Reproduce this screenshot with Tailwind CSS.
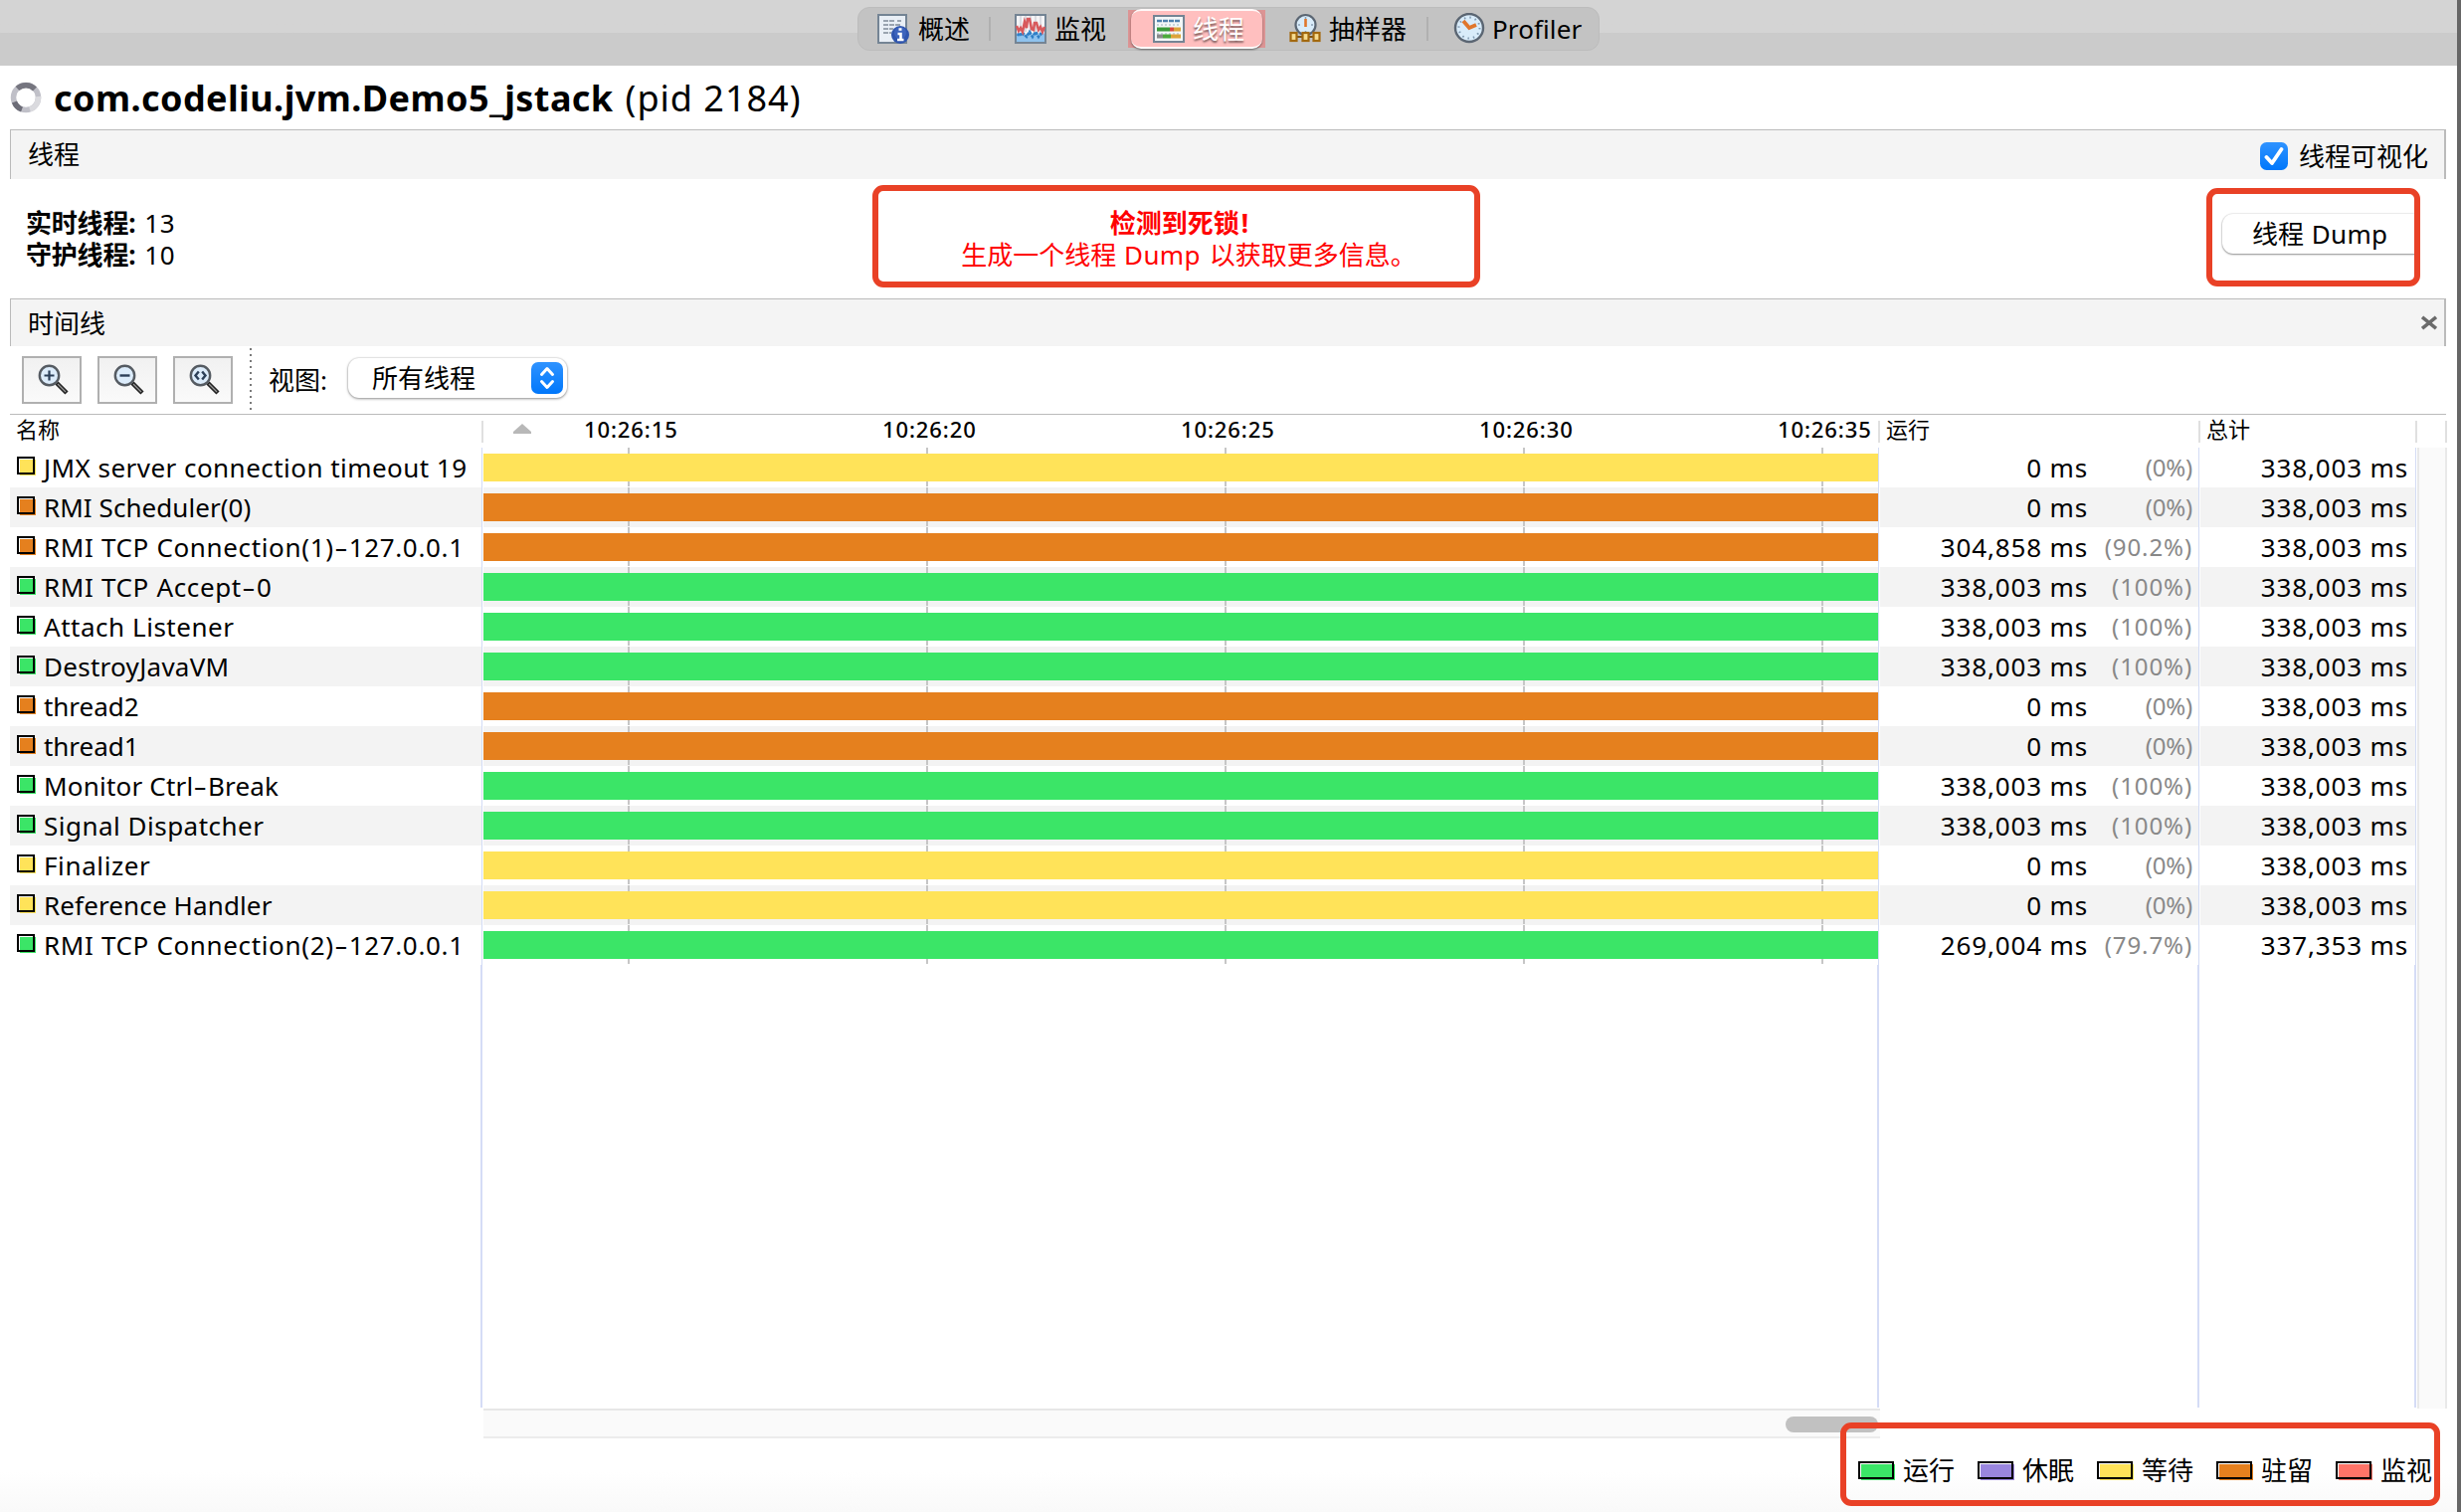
<!DOCTYPE html>
<html lang="zh-CN">
<head>
<meta charset="utf-8">
<title>VisualVM</title>
<script src="https://cdn.jsdelivr.net/npm/@tailwindcss/browser@4"></script>
</head>
<body class="flex w-[2474px] h-[1520px] overflow-hidden bg-white text-black text-[26px] leading-8 whitespace-nowrap font-['Noto_Sans','Noto_Sans_CJK_SC',sans-serif]">
<main class="relative flex flex-col w-[2470px] h-[1520px]">

  <!-- Tab strip -->
  <header class="flex h-[66px] shrink-0 justify-center items-start pt-[7px] bg-linear-to-b from-[#d4d4d4] from-50% to-[#cbcbcb] to-50%">
    <nav class="flex items-center w-[746px] h-11 rounded-xl bg-[#c3c3c3] border border-[#bcbcbc] pl-[19px] leading-[42px]">
      <svg class="w-8 h-8 shrink-0" viewBox="0 0 32 32">
        <rect x="1" y="2" width="28" height="28" fill="#e9eff6" stroke="#748494" stroke-width="2"/>
        <path d="M6 8h12M6 12h18M6 16h10M20 8h4M6 20h8" stroke="#9aa4b0" stroke-width="2" stroke-dasharray="5 1"/>
        <circle cx="23" cy="22" r="9" fill="#2f55ae"/><circle cx="23" cy="20" r="6" fill="#4c74cc" opacity=".5"/>
        <path d="M21.500 16.500h3M20.500 21h3v6M20 27h6.500" stroke="#fff" stroke-width="2.600" fill="none"/>
      </svg>
      <span class="ml-[9px] w-[54px]">概述</span>
      <i class="ml-[17px] w-0.5 h-6 bg-[#b0b0b0]"></i>
      <svg class="ml-[24px] w-8 h-8 shrink-0" viewBox="0 0 32 32">
        <rect x="1" y="2" width="30" height="28" fill="#f4f4f6" stroke="#748494" stroke-width="2"/>
        <path d="M6 3v16M11 3v16M16 3v16M21 3v16M26 3v16" stroke="#d2d4dc" stroke-width="1.500"/>
        <path d="M2 20l3 2 3-3 3 3 4-4 3 4 4-3 3 3 3-3 2 2v8H2z" fill="#8fc3ee"/>
        <path d="M3 23l2-3 2 3 2-2 3 3 3-5 3 5 3-5 3 5 2-3 2 2" stroke="#2e7fc6" stroke-width="2.600" fill="none" stroke-dasharray="3 1"/>
        <path d="M2 13l2 5 2-3 2 4 2-10 2 6 1-9 2 0 2 10 2 1 1-7 2 0 2 7 2-3 2 5 2-5" stroke="#d8595c" stroke-width="2.600" fill="none"/>
      </svg>
      <span class="ml-[8px] w-[54px]">监视</span>
      <div class="ml-[20px] w-[138px] h-[38px] shrink-0 flex justify-center items-center bg-[#dc9494]">
        <div class="flex items-center w-[132px] h-10 shrink-0 rounded-[10px] bg-[#ffbfbf] border-y-2 border-t-white/90 border-b-white shadow-[0_1px_2px_#0007] pl-[22px]">
          <svg class="w-8 h-8 shrink-0" viewBox="0 0 32 32">
            <rect x="1" y="3" width="30" height="26" fill="#f3f7f8" stroke="#748494" stroke-width="2"/>
            <path d="M4 8h24" stroke="#4f81ae" stroke-width="2.500" stroke-dasharray="5 1"/>
            <path d="M4 12h24M4 21h24" stroke="#c7d4da" stroke-width="2" stroke-dasharray="2 2"/>
            <path d="M4 16.500h13" stroke="#3a9a3a" stroke-width="4"/><path d="M17 16.500h4" stroke="#d84b3c" stroke-width="4"/><path d="M21 16.500h7" stroke="#dca43a" stroke-width="4"/>
            <path d="M4 23.500h6" stroke="#8a8a8a" stroke-width="4"/><path d="M10 23.500h8" stroke="#4caa3c" stroke-width="4"/><path d="M18 23.500h10" stroke="#dca43a" stroke-width="4"/>
          </svg>
          <span class="ml-[8px] text-white [text-shadow:0_2px_2px_#0008]">线程</span>
        </div>
      </div>
      <svg class="ml-[24px] w-8 h-8 shrink-0" viewBox="0 0 32 32">
        <circle cx="16.500" cy="12" r="10" fill="#d9ecfa" stroke="#5b6673" stroke-width="2.200"/>
        <path d="M16.500 4v2M16.500 18v2M9 12h2M22 12h2" stroke="#8aa0b5" stroke-width="1.500"/>
        <path d="M16.500 6v8" stroke="#e0762c" stroke-width="2.600"/>
        <path d="M7 24h18" stroke="#7c5413" stroke-width="2"/>
        <g fill="#f6dc90" stroke="#a3690f" stroke-width="2.200"><rect x="1.500" y="20" width="6" height="8"/><rect x="13.500" y="20" width="6" height="8"/><rect x="24.500" y="20" width="6" height="8"/></g>
      </svg>
      <span class="ml-[8px] w-[80px]">抽样器</span>
      <i class="ml-[18px] w-0.5 h-6 bg-[#b0b0b0]"></i>
      <svg class="ml-[25px] w-8 h-8 shrink-0" viewBox="0 0 32 32">
        <circle cx="16" cy="15" r="14" fill="#d9ecfa" stroke="#5b6673" stroke-width="2.400"/>
        <circle cx="16" cy="15" r="10.500" fill="none" stroke="#7f98b0" stroke-width="2" stroke-dasharray="1.500 4"/>
        <path d="M10 8l6 7 7-3" fill="none" stroke="#e0762c" stroke-width="3.800"/>
      </svg>
      <span class="ml-[7px] tracking-[0.1px]">Profiler</span>
    </nav>
  </header>

  <!-- Application title -->
  <h1 class="flex items-center h-16 shrink-0 pl-[10px] text-[36px] leading-[65px]">
    <svg class="w-8 h-8 shrink-0" viewBox="0 0 32 32" fill="none" stroke-width="5.500">
      <circle cx="16" cy="16" r="12.500" stroke="#c0c0c8"/>
      <path d="M7.500 7A12.500 12.500 0 0 1 25 7.500" stroke="#75757f"/>
      <path d="M4.500 20.500A12.500 12.500 0 0 0 12 28" stroke="#6c6c77"/>
      <path d="M28.500 15A12.500 12.500 0 0 1 20 28" stroke="#dadade"/>
    </svg>
    <b class="ml-[12px] tracking-[0.42px]">com.codeliu.jvm.Demo5_jstack</b>
    <span class="ml-[12px] tracking-[1px]">(pid 2184)</span>
  </h1>

  <!-- Threads section -->
  <div class="ml-[10px] w-[2449px] h-[50px] shrink-0 flex items-center justify-between pl-[17px] pr-[16px] bg-[#f4f4f4] border-t border-l border-r-2 border-[#bbb]">
    <span class="-mt-[2px]">线程</span>
    <label class="flex items-center mt-[2px]">
      <svg class="w-7 h-7 mr-[11px]" viewBox="0 0 28 28"><defs><linearGradient id="blue" x2="0" y2="1"><stop stop-color="#2f93ff"/><stop offset="1" stop-color="#0077fb"/></linearGradient></defs><rect width="28" height="28" rx="6.500" fill="url(#blue)"/><path d="M6.500 15l5.500 6L21.500 7" fill="none" stroke="#fff" stroke-width="3.800" stroke-linecap="round" stroke-linejoin="round"/></svg>
      线程可视化
    </label>
  </div>
  <section class="flex h-[120px] shrink-0 pl-[26px]">
    <div class="w-[851px] pt-[28px]">
      <p><b class="tracking-[-0.2px]">实时线程:</b><span class="ml-[9px] tracking-[0.5px]">13</span></p>
      <p><b class="tracking-[-0.2px]">守护线程:</b><span class="ml-[9px] tracking-[0.5px]">10</span></p>
    </div>
    <div class="mt-[6px] w-[611px] h-[103px] rounded-[11px] border-[6px] border-[#e94126] text-[#f00] text-center pt-[16px] pl-[6px]">
      <p class="font-bold">检测到死锁<span class="ml-0.5">!</span></p>
      <p class="pl-[19px]">生成一个线程 <span class="ml-px mr-0.5 tracking-[0.4px]">Dump</span> 以获取更多信息。</p>
    </div>
    <div class="ml-[730px] mt-[9px] w-[215px] h-[99px] rounded-[11px] border-[6px] border-[#e94126] overflow-hidden pl-[10px] pt-[20px]">
      <button class="block w-[205px] h-10 rounded-[11px] bg-white shadow-[0_0_1px_1px_#0001,0_1px_2px_#0006] pl-[30px] text-left leading-[37px]">线程 <span class="ml-px tracking-[0.3px]">Dump</span></button>
    </div>
  </section>

  <!-- Timeline section -->
  <div class="ml-[10px] w-[2449px] h-12 shrink-0 flex items-center justify-between pl-[17px] pr-[7px] bg-[#f4f4f4] border-t border-l border-r-2 border-[#bbb]">
    <span>时间线</span>
    <svg class="w-4 h-[15px]" viewBox="0 0 16 16" preserveAspectRatio="none"><path d="M1 2l14 12M15 2L1 14" stroke="#6a6a6a" stroke-width="3.600"/></svg>
  </div>
  <div class="flex items-center ml-[10px] w-[2449px] h-[69px] shrink-0 border-b border-[#bbb] pl-[12px]">
    <div class="flex gap-4">
      <button class="w-[60px] h-12 border-2 border-[#b0b0b0] bg-linear-to-b from-[#f1f1f1] to-[#fafafa] pl-[14px]">
        <svg class="w-8 h-8" viewBox="0 0 32 32"><path d="M19 19l10 10" stroke="#222" stroke-width="4.500"/><path d="M20 20l8 8" stroke="#999" stroke-width="1.200"/><circle cx="11.500" cy="11.500" r="9.700" fill="#dcecfb" stroke="#555b62" stroke-width="2.400"/><path d="M11.500 6.500v10M6.500 11.500h10" stroke="#2b3f58" stroke-width="2.200"/></svg>
      </button>
      <button class="w-[60px] h-12 border-2 border-[#b0b0b0] bg-linear-to-b from-[#f1f1f1] to-[#fafafa] pl-[14px]">
        <svg class="w-8 h-8" viewBox="0 0 32 32"><path d="M19 19l10 10" stroke="#222" stroke-width="4.500"/><path d="M20 20l8 8" stroke="#999" stroke-width="1.200"/><circle cx="11.500" cy="11.500" r="9.700" fill="#dcecfb" stroke="#555b62" stroke-width="2.400"/><path d="M6.500 11.500h10" stroke="#2b3f58" stroke-width="2.400"/></svg>
      </button>
      <button class="w-[60px] h-12 border-2 border-[#b0b0b0] bg-linear-to-b from-[#f1f1f1] to-[#fafafa] pl-[14px]">
        <svg class="w-8 h-8" viewBox="0 0 32 32"><path d="M19 19l10 10" stroke="#222" stroke-width="4.500"/><path d="M20 20l8 8" stroke="#999" stroke-width="1.200"/><circle cx="11.500" cy="11.500" r="9.700" fill="#dcecfb" stroke="#555b62" stroke-width="2.400"/><path d="M9.800 7.500L6.500 11.500l3.300 4M13.200 7.500l3.300 4-3.300 4" fill="none" stroke="#2b3f58" stroke-width="2.400"/></svg>
      </button>
    </div>
    <svg class="ml-[17px] w-0.5 h-[64px]" viewBox="0 0 2 64"><path d="M1 0v62" stroke="#7a7a7a" stroke-width="2" stroke-dasharray="2 4"/></svg>
    <span class="ml-[17px]">视图:</span>
    <div class="flex items-center ml-[21px] -mt-[5px] w-[220px] h-10 rounded-[11px] shadow-[0_0_1px_1px_#0001,0_1px_3px_#0006] pl-[24px] pr-1">
      <span class="flex-1">所有线程</span>
      <svg class="w-8 h-8" viewBox="0 0 32 32"><rect width="32" height="32" rx="7" fill="url(#blue)"/><path d="M10.500 12.500L16 6.500l5.500 6M10.500 19.500L16 25.500l5.500-6" fill="none" stroke="#fff" stroke-width="3" stroke-linecap="round" stroke-linejoin="round"/></svg>
    </div>
  </div>

  <!-- Column headings -->
  <div class="flex items-center ml-[10px] w-[2450px] h-[33px] shrink-0 text-[22px] leading-[30px]">
    <div class="w-[476px] h-[22px] flex items-center border-r-2 border-[#e0e0e0] pl-[6px]"><span class="-mt-[5px]">名称</span></div>
    <div class="w-[1404px] h-[22px] flex items-center border-r-2 border-[#e0e0e0] font-medium tracking-[0.9px]">
      <svg class="ml-[30px] mr-[53px] -mt-[5px] w-[18px] h-[10px]" viewBox="0 0 18 10"><path d="M9 0l9 8v2H0V8z" fill="#b8b8b8"/></svg>
      <div class="flex -mt-[5px]"><span class="w-[300px]">10:26:15</span><span class="w-[300px]">10:26:20</span><span class="w-[300px]">10:26:25</span><span class="w-[300px]">10:26:30</span><span class="w-[94px]">10:26:35</span></div>
    </div>
    <div class="w-[322px] h-[22px] flex items-center border-r-2 border-[#e0e0e0] pl-[6px]"><span class="-mt-[5px]">运行</span></div>
    <div class="w-[218px] h-[22px] flex items-center border-r-2 border-[#e0e0e0] pl-[6px]"><span class="-mt-[5px]">总计</span></div>
    <div class="w-[30px] h-[22px] border-r-2 border-[#e0e0e0]"></div>
  </div>

  <!-- Thread table -->
  <div class="flex ml-[10px] w-[2450px] h-[966px] shrink-0">
    <div class="flex flex-col w-[2419px]">
      <div id="rows"></div>
      <div class="flex h-[445px]">
        <i class="w-[475px] border-r-2 border-[#d5dcf6]"></i>
        <i class="w-[1404px] border-r-2 border-[#d5dcf6]"></i>
        <i class="w-[322px] border-r-2 border-[#d5dcf6]"></i>
        <i class="w-[218px] border-r-2 border-[#d5dcf6]"></i>
      </div>
    </div>
    <div class="ml-[1px] w-[30px] h-[966px] bg-[#fafafa] border-l-2 border-r-2 border-[#e9e9e9]"></div>
  </div>
  <div class="ml-[486px] w-[1404px] h-[30px] shrink-0 flex justify-end items-center bg-[#fafafa] border-y-2 border-t-[#e7e7e7] border-b-[#ececec] pr-[2px]">
    <i class="mt-[2px] w-[93px] h-4 rounded-full bg-[#c1c1c1]"></i>
  </div>

  <!-- Legend -->
  <footer class="flex-1 flex justify-end pt-[16px] bg-linear-to-b from-white from-45% to-[#f9f9f9]">
    <div id="legend" class="flex pr-[2px]"></div>
  </footer>
  <div class="absolute left-[1850px] top-[1430px] w-[603px] h-[84px] rounded-[11px] border-[6px] border-[#e94126]"></div>
</main>
<aside class="w-1 h-[1520px] bg-[#666]"></aside>

<script>
const states = {
  run: 'bg-[#3be567]', sleep: 'bg-[#9a86de]', wait: 'bg-[#ffe359]', park: 'bg-[#e5801e]', monitor: 'bg-[#ff7468]'
};
const T = '338,003 ms';
const threads = [
  ['JMX server connection timeout 19', 'wait', '0 ms', '(0%)', T, 'tracking-[0.46px]'],
  ['RMI Scheduler(0)', 'park', '0 ms', '(0%)', T, 'tracking-[0.06px]'],
  ['RMI TCP Connection(1)-127.0.0.1', 'park', '304,858 ms', '(90.2%)', T, 'tracking-[0.65px]'],
  ['RMI TCP Accept-0', 'run', T, '(100%)', T, 'tracking-[0.65px]'],
  ['Attach Listener', 'run', T, '(100%)', T, 'tracking-[0.53px]'],
  ['DestroyJavaVM', 'run', T, '(100%)', T, 'tracking-[0.28px]'],
  ['thread2', 'park', '0 ms', '(0%)', T, 'tracking-[-0.04px]'],
  ['thread1', 'park', '0 ms', '(0%)', T, 'tracking-[-0.04px]'],
  ['Monitor Ctrl-Break', 'run', T, '(100%)', T, 'tracking-[0.2px]'],
  ['Signal Dispatcher', 'run', T, '(100%)', T, 'tracking-[0.49px]'],
  ['Finalizer', 'wait', '0 ms', '(0%)', T, 'tracking-[0.62px]'],
  ['Reference Handler', 'wait', '0 ms', '(0%)', T, 'tracking-[0.13px]'],
  ['RMI TCP Connection(2)-127.0.0.1', 'run', '269,004 ms', '(79.7%)', '337,353 ms', 'tracking-[0.65px]']
];
const tick = '<i class="w-0.5 h-[39px] bg-[#c6c6c6]"></i>';
const wideHyphen = '<span class="inline-block scale-x-[1.6] mx-[3px]">-</span>';
document.getElementById('rows').innerHTML = threads.map(([name, st, ms, pct, total, track], i) => {
  const bg = i % 2 ? 'bg-[#f3f3f3]' : 'bg-white';
  return `<div class="flex h-10 leading-10">
    <div class="w-[474px] ${bg} flex pl-[7px]">
      <span class="relative mt-[9px] w-[19px] h-[19px]"><i class="absolute left-[3px] top-[3px] size-4 ${states[st]}"></i><i class="absolute left-0 top-0 size-[18px] border-2 border-black"></i></span>
      <span class="ml-[8px] ${track}">${name.replace('-', wideHyphen)}</span>
    </div>
    <i class="w-px bg-[#d3dcf5]"></i>
    <div class="relative ml-px w-[1402px] ${bg}">
      <div class="flex justify-between pl-[145px] pr-[55px]">${tick.repeat(5)}</div>
      <i class="absolute left-0 top-1.5 w-full h-7 ${states[st]}"></i>
    </div>
    <i class="w-px bg-[#d3dcf5]"></i>
    <div class="ml-px w-[320px] ${bg} flex justify-end pr-[6px]">
      <span class="tracking-[0.85px]">${ms}</span>
      <span class="w-[105px] text-right text-[24px] text-[#888] ${pct === '(0%)' ? 'tracking-[-0.2px]' : 'tracking-[0.9px]'}">${pct}</span>
    </div>
    <i class="w-px bg-[#d3dcf5]"></i>
    <div class="ml-px w-[216px] ${bg} pr-[7px] text-right tracking-[0.85px]">${total}</div>
    <i class="w-px bg-[#d3dcf5]"></i>
  </div>`;
}).join('');
document.getElementById('legend').innerHTML = [['运行', 'run'], ['休眠', 'sleep'], ['等待', 'wait'], ['驻留', 'park'], ['监视', 'monitor']].map(([t, st]) =>
  `<div class="flex items-center w-[120px] h-8">
    <span class="relative w-[37px] h-[18px] mr-[8px]"><i class="absolute left-[3px] top-[3px] w-[34px] h-4 ${states[st]}"></i><i class="absolute left-0 top-0 w-9 h-[18px] border-2 border-black"></i></span>${t}
  </div>`).join('');
</script>
</body>
</html>
